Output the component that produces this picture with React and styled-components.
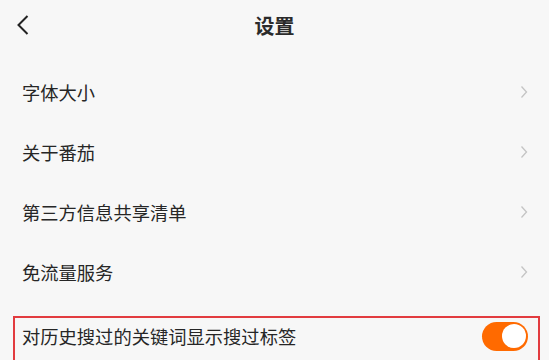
import React from 'react';
import styled, { createGlobalStyle } from 'styled-components';

const GlobalStyle = createGlobalStyle`
  html, body {
    margin: 0;
    padding: 0;
    background: #f7f7f7;
  }
  body {
    font-family: "Noto Sans CJK SC", "Noto Sans", sans-serif;
    color: #2a2a2a;
  }
`;

const Page = styled.div`
  width: 549px;
  height: 360px;
  overflow: hidden;
  background: #f7f7f7;
`;

const Header = styled.header`
  height: 50px;
  display: grid;
  grid-template-columns: 60px 1fr 60px;
  align-items: center;
`;

const BackButton = styled.button`
  border: none;
  background: none;
  padding: 0 0 0 15px;
  display: flex;
  align-items: center;
  height: 100%;
`;

const Title = styled.h1`
  margin: 0;
  text-align: center;
  font-size: 20px;
  font-weight: 700;
  color: #2b2b2b;
`;

const List = styled.div`
  padding-top: 12px;
  display: flex;
  flex-direction: column;
`;

const Row = styled.div`
  height: ${p => p.$h || 60}px;
  display: flex;
  align-items: center;
  justify-content: space-between;
  padding: ${p => p.$pad || '0 21px 0 22px'};
`;

const Label = styled.span`
  font-size: 18.3px;
  color: #262626;
`;

const Highlight = styled.div`
  margin: 14px 9px 0 13px;
  border: 2px solid #e23b3f;
  border-bottom: none;
  height: 60px;
`;

const Toggle = styled.div`
  width: 46px;
  height: 29px;
  border-radius: 15px;
  background: ${p => (p.$on ? '#ff6a00' : '#ddd')};
  position: relative;

  &::after {
    content: '';
    position: absolute;
    top: 2.5px;
    right: ${p => (p.$on ? '2px' : '20px')};
    width: 24px;
    height: 24px;
    border-radius: 50%;
    background: #fff;
  }
`;

const Chevron = () => (
  <svg width="8" height="14" viewBox="0 0 8 14">
    <path d="M1.5 1.5 L6.5 7 L1.5 12.5" fill="none" stroke="#c4c4c4" strokeWidth="1.3" />
  </svg>
);

const items = ['字体大小', '关于番茄', '第三方信息共享清单', '免流量服务'];

export default function App() {
  return (
    <Page>
      <GlobalStyle />
      <Header>
        <BackButton aria-label="返回">
          <svg width="16" height="22" viewBox="0 0 16 22">
            <path d="M12.5 2 L3.5 11 L12.5 20" fill="none" stroke="#222" strokeWidth="2" />
          </svg>
        </BackButton>
        <Title>设置</Title>
        <span />
      </Header>
      <List>
        {items.map(t => (
          <Row key={t}>
            <Label>{t}</Label>
            <Chevron />
          </Row>
        ))}
        <Highlight>
          <Row $h={36} $pad="0 10px 0 7px">
            <Label>对历史搜过的关键词显示搜过标签</Label>
            <Toggle $on />
          </Row>
        </Highlight>
      </List>
    </Page>
  );
}
